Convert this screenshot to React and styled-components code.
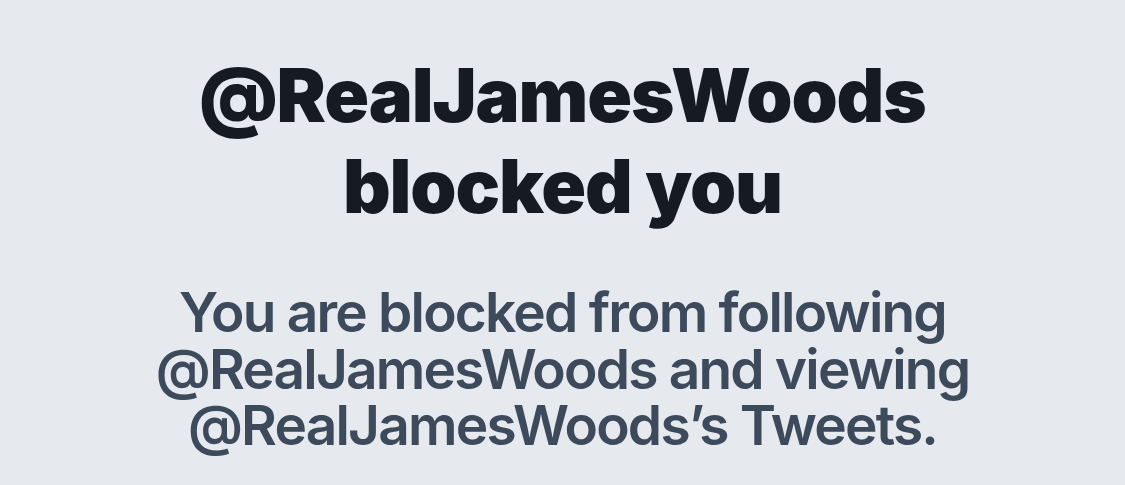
import React from "react";
import styled, { createGlobalStyle } from "styled-components";

const Global = createGlobalStyle`
  html, body { margin: 0; padding: 0; background: #e6e9ee; }
  body { font-family: Inter, "Noto Sans", sans-serif; }
`;

const Page = styled.main`
  width: 1125px;
  height: 485px;
  overflow: hidden;
  background: #e6e9ee;
  display: flex;
  flex-direction: column;
  align-items: center;
  padding-top: 50px;
  box-sizing: border-box;
`;

const Title = styled.h1`
  margin: 0;
  font-family: Inter, sans-serif;
  font-weight: 900;
  font-size: 74px;
  line-height: 91px;
  letter-spacing: -1.1px;
  color: #161b22;
  text-align: center;
`;

const Body = styled.p`
  margin: 52px 0 0;
  font-family: Inter, sans-serif;
  font-weight: 600;
  font-size: 55px;
  line-height: 56.5px;
  letter-spacing: -1.8px;
  color: #3d4a5c;
  text-align: center;
`;

export default function App() {
  return (
    <Page>
      <Global />
      <Title>
        @RealJamesWoods
        <br />
        blocked you
      </Title>
      <Body>
        You are blocked from following
        <br />
        @RealJamesWoods and viewing
        <br />
        @RealJamesWoods’s Tweets.
      </Body>
    </Page>
  );
}
